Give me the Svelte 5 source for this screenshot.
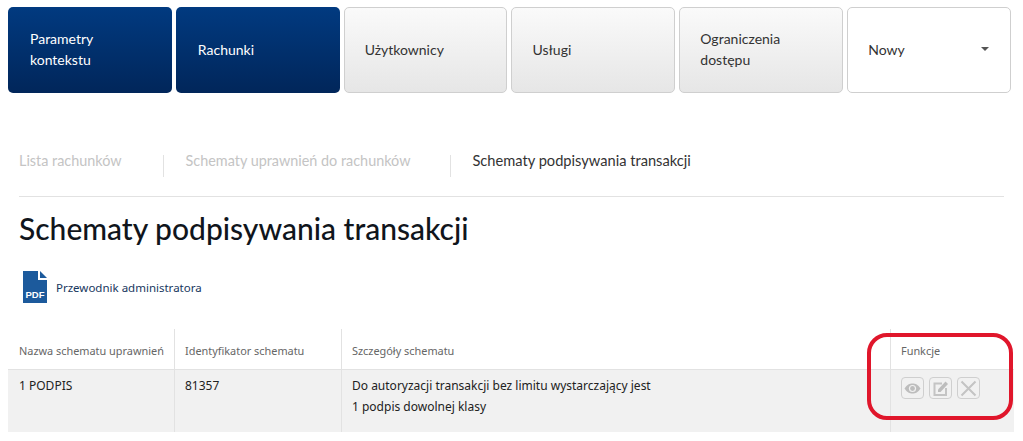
<script>
  const tabs = [
    { label: 'Parametry kontekstu', kind: 'active' },
    { label: 'Rachunki', kind: 'active' },
    { label: 'Użytkownicy', kind: 'plain' },
    { label: 'Usługi', kind: 'plain' },
    { label: 'Ograniczenia dostępu', kind: 'plain' }
  ];
  const subtabs = [
    { label: 'Lista rachunków', current: false },
    { label: 'Schematy uprawnień do rachunków', current: false },
    { label: 'Schematy podpisywania transakcji', current: true }
  ];
</script>

<div class="page">
  <nav class="tabs">
    {#each tabs as t}
      <div class="tab {t.kind}"><span>{t.label}</span></div>
    {/each}
    <div class="tab select">
      <span>Nowy</span>
      <i class="caret"></i>
    </div>
  </nav>

  <div class="content">
    <ul class="subtabs">
      {#each subtabs as s}
        <li class:current={s.current}>{s.label}</li>
      {/each}
    </ul>

    <h1>Schematy podpisywania transakcji</h1>

    <a class="pdf" href="#top">
      <svg width="25" height="32" viewBox="0 0 25 32">
        <path d="M0 0H15V9H24V32H0Z" fill="#1c5a9c" />
        <path d="M17 0L24 7H17Z" fill="#1c5a9c" />
        <text x="12" y="27" text-anchor="middle" class="pdf-label">PDF</text>
      </svg>
      <span>Przewodnik administratora</span>
    </a>
  </div>

  <div class="table-wrap">
    <div class="row head">
      <div class="cell c1">Nazwa schematu uprawnień</div>
      <div class="cell c2">Identyfikator schematu</div>
      <div class="cell c3">Szczegóły schematu</div>
      <div class="cell c4">Funkcje</div>
    </div>
    <div class="row body">
      <div class="cell c1">1 PODPIS</div>
      <div class="cell c2">81357</div>
      <div class="cell c3">
        <p>Do autoryzacji transakcji bez limitu wystarczający jest</p>
        <p>1 podpis dowolnej klasy</p>
      </div>
      <div class="cell c4 actions">
        <button aria-label="Podgląd">
          <svg width="17" height="17" viewBox="0 0 17 17">
            <path d="M0.5 8.5C3 4.5 5.5 3.5 8.5 3.5S14 4.5 16.5 8.5C14 12.5 11.5 13.5 8.5 13.5S3 12.5 0.5 8.5Z" fill="#bdbdbd" />
            <circle cx="8.5" cy="8.5" r="3.6" fill="#f1f1f1" />
            <circle cx="8.5" cy="8.5" r="2.4" fill="#bdbdbd" />
          </svg>
        </button>
        <button aria-label="Edycja">
          <svg width="17" height="17" viewBox="0 0 17 17">
            <path d="M10 3.5H2.5V15H14V8" fill="none" stroke="#c4c4c4" stroke-width="2" />
            <path d="M6 9.5L13.5 1.5L16 4L8.5 12H6Z" fill="#bdbdbd" />
          </svg>
        </button>
        <button aria-label="Usuń">
          <svg width="17" height="17" viewBox="0 0 17 17">
            <path d="M1.5 1.5L15.5 15.5M15.5 1.5L1.5 15.5" stroke="#c4c4c4" stroke-width="2" fill="none" />
          </svg>
        </button>
      </div>
    </div>
  </div>

  <div class="highlight"></div>
</div>

<style>
  :global(body) {
    margin: 0;
    background: #fff;
  }

  .page {
    position: relative;
    height: 441px;
    overflow: hidden;
    font-family: "Noto Sans", sans-serif;
  }

  .tabs {
    display: grid;
    grid-template-columns: repeat(6, 1fr);
    gap: 4px;
    padding: 7px 12px 0 8px;
  }

  .tab {
    height: 86px;
    box-sizing: border-box;
    display: flex;
    align-items: center;
    padding: 0 20px 2px;
    border-radius: 5px;
    font-family: Lato, sans-serif;
    font-size: 14px;
    line-height: 21px;
  }

  .tab span {
    max-width: 110px;
  }

  .active {
    background: linear-gradient(#013a80, #01265a);
    color: #fff;
    padding-left: 22px;
  }

  .plain {
    background: linear-gradient(#fafafa, #e6e6e6);
    border: 1px solid #cfcfcf;
    color: #333;
  }

  .select {
    background: #fff;
    border: 1px solid #cfcfcf;
    color: #333;
    justify-content: space-between;
    padding-right: 21px;
  }

  .caret {
    width: 0;
    height: 0;
    margin-top: -1px;
    border: 4px solid transparent;
    border-top-color: #555;
    border-bottom: 0;
  }

  .content {
    padding: 0 19px;
  }

  .subtabs {
    list-style: none;
    display: flex;
    margin: 62px 0 0;
    padding: 0 0 19px;
    width: 985px;
    border-bottom: 1px solid #e2e2e2;
    font-family: Lato, sans-serif;
    font-size: 14.4px;
    line-height: 12px;
    color: #c4c4c4;
  }

  .subtabs li {
    padding: 0 41px 10px 0;
    margin-right: 22px;
    border-right: 1px solid #e2e2e2;
  }

  .subtabs li:nth-child(2) {
    padding-right: 40px;
  }

  .subtabs li.current {
    color: #333;
    font-size: 14.65px;
    border: 0;
    padding: 0;
    margin: 0 0 0 -1px;
  }

  h1 {
    margin: 11px 0 0;
    font-family: Lato, sans-serif;
    font-size: 30px;
    line-height: 40px;
    font-weight: 500;
    color: #10151c;
  }

  .pdf {
    display: flex;
    align-items: center;
    gap: 8px;
    margin: 23px 0 0 4px;
    font-size: 11.5px;
    color: #17375e;
    text-decoration: none;
  }

  .pdf-label {
    font-family: "Liberation Sans", sans-serif;
    font-size: 9.5px;
    font-weight: 700;
    fill: #fff;
  }

  .table-wrap {
    margin: 26px 9px 0 8px;
    font-size: 12px;
  }

  .row {
    display: grid;
    grid-template-columns: 167px 167px 549px 1fr;
  }

  .head {
    height: 41px;
    color: #666;
    font-size: 10.9px;
    line-height: 44px;
    border-bottom: 1px solid #e2e2e2;
    box-sizing: border-box;
  }

  .body {
    height: 62px;
    background: #f1f1f1;
    color: #222;
    line-height: 21px;
  }

  .cell {
    padding: 0 10px;
    border-right: 1px solid #e2e2e2;
    white-space: nowrap;
  }

  .cell.c1 {
    padding-left: 11px;
  }

  .cell.c4 {
    border-right: 0;
  }

  .body .cell {
    padding-top: 5px;
  }

  .cell p {
    margin: 0;
  }

  .actions {
    display: flex;
    gap: 5px;
    align-items: flex-start;
    padding-top: 7px !important;
  }

  .actions button {
    width: 23px;
    height: 22px;
    padding: 0;
    display: flex;
    align-items: center;
    justify-content: center;
    background: transparent;
    border: 1px solid #cfcfcf;
    border-radius: 4px;
  }

  .highlight {
    position: absolute;
    left: 867px;
    top: 333px;
    width: 146px;
    height: 87px;
    box-sizing: border-box;
    border: 4px solid #e0162b;
    border-radius: 20px;
  }
</style>
